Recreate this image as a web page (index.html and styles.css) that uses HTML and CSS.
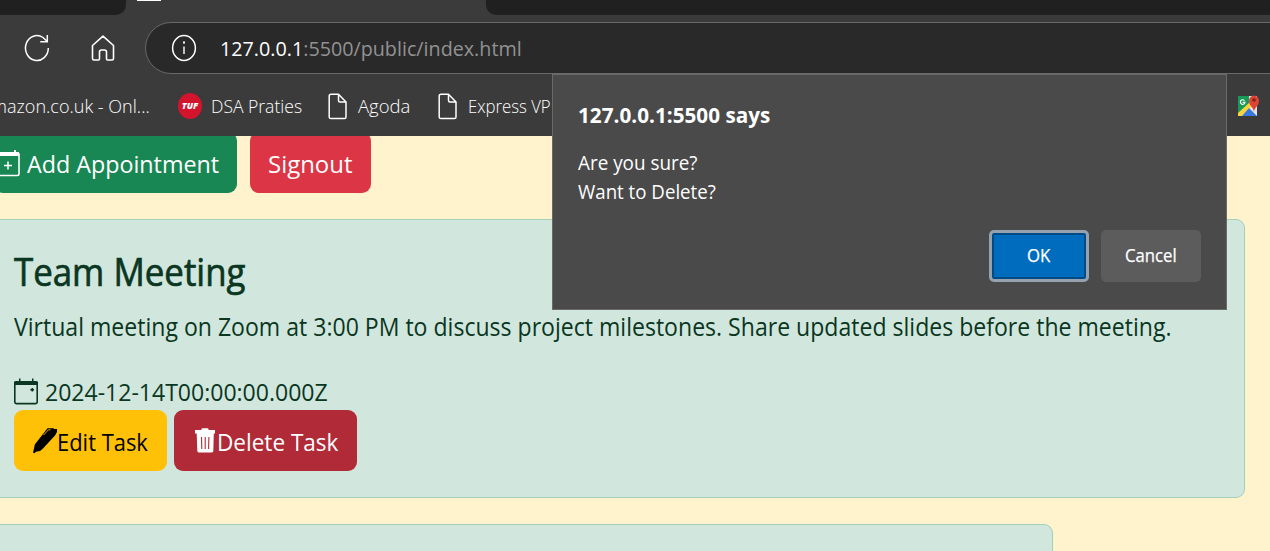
FILE: index.html
```html
<!DOCTYPE html>
<html lang="en">
<head>
<meta charset="utf-8">
<title>Appointments</title>
<link rel="stylesheet" href="styles.css">
</head>
<body>
<div class="window">
  <header class="chrome">
    <div class="tabs">
      <div class="tab-rest tab-left"></div>
      <div class="tab-active"><span class="favicon"></span></div>
      <div class="tab-rest tab-right"></div>
    </div>
    <div class="toolbar">
      <svg class="reload" width="26" height="28" viewBox="0 0 26 28" fill="none" stroke="#fff" stroke-width="1.5"><path d="M24.300 14A11.400 12.500 0 1 1 19 3.500L23.500 7.700M23.300 1v6.700h-7"/></svg>
      <svg class="home" width="24" height="26" viewBox="0 0 24 26" fill="none" stroke="#fff" stroke-width="1.6" stroke-linejoin="round"><path d="M1.500 10.5 12 1.200l10.500 9.300V23.500q0 1.500-1.500 1.500h-4.500q-1 0-1-1.300V17q0-2-2-2h-3q-2 0-2 2v6.700q0 1.300-1 1.300H3q-1.500 0-1.500-1.500z"/></svg>
      <div class="address">
        <svg class="info" width="26" height="28" viewBox="0 0 26 28"><ellipse cx="13" cy="14" rx="11.400" ry="12.500" fill="none" stroke="#fff" stroke-width="1.500"/><path d="M12.300 12.500h1.400V20h-1.400zM12 7.500h2v2h-2z" fill="#fff"/></svg>
        <span class="url"><b>127.0.0.1</b>:5500/public/index.html</span>
      </div>
    </div>
    <nav class="bookmarks">
      <span class="bm bm-amazon">mazon.co.uk - Onl...</span>
      <span class="tuf">TUF</span>
      <span class="bm bm-dsa">DSA Praties</span>
      <svg class="page-icon" width="20" height="27" viewBox="0 0 20 27" fill="none" stroke="#fff" stroke-width="1.500" stroke-linejoin="round"><path d="M3 1.200h7.500L18 9v15q0 1.600-1.500 1.600H3Q1.200 25.600 1.200 24V3Q1.200 1.200 3 1.200zM10.500 1.200V7.500q0 1.500 1.500 1.500h6"/></svg>
      <span class="bm bm-agoda">Agoda</span>
      <svg class="page-icon" width="20" height="27" viewBox="0 0 20 27" fill="none" stroke="#fff" stroke-width="1.500" stroke-linejoin="round"><path d="M3 1.200h7.500L18 9v15q0 1.600-1.500 1.600H3Q1.200 25.600 1.200 24V3Q1.200 1.200 3 1.200zM10.500 1.200V7.500q0 1.500 1.500 1.500h6"/></svg>
      <span class="bm bm-express">Express VP</span>
      <svg class="maps" width="24" height="26" viewBox="0 0 24 26"><path d="M1 3h19v20H1z" fill="#e8eaed"/><path d="M1 3h11v9L1 21z" fill="#169a56"/><path d="M1 20 13 9l3 3L5 23H1z" fill="#fbd43b"/><path d="M5 23l7-8 8 8z" fill="#3978df"/><path d="M14 14l6 7V10z" fill="#dfe3e8"/><path d="M7.500 7.600A2.300 2.300 0 1 0 8 9.300H5.700" fill="none" stroke="#fff" stroke-width="1.200"/><path d="M17 19c-.4-5-5-6-5-11a5 5.500 0 0 1 10 0c0 5-4.600 6-5 11z" fill="#df4336"/><circle cx="17" cy="7" r="1.800" fill="#7b2119"/></svg>
    </nav>
  </header>

  <main class="page">
    <div class="actions">
      <button class="btn btn-add">
        <svg width="26" height="28" viewBox="0 0 26 28"><path d="M1 5h24v20q0 1.500-1.500 1.500h-21Q1 26.500 1 25z" fill="none" stroke="#fff" stroke-width="1.600"/><path d="M1 3h24v4H1zM4 1h2v3H4zM20 1h2v3h-2z" fill="#fff"/><path d="M14 12.500v8M10 16.500h8" stroke="#fff" stroke-width="1.500"/></svg>
        <span class="t-add">Add Appointment</span>
      </button>
      <button class="btn btn-signout"><span class="t-signout">Signout</span></button>
    </div>
    <section class="card">
      <h2 class="title"><span class="t-title">Team Meeting</span></h2>
      <p class="desc"><span class="t-desc">Virtual meeting on Zoom at 3:00 PM to discuss project milestones. Share updated slides before the meeting.</span></p>
      <div class="date">
        <svg width="24" height="27" viewBox="0 0 24 27"><path d="M.8 4.500h22.400V24q0 1.600-1.500 1.600H2.300Q.8 25.600.8 24z" fill="none" stroke="#0a3622" stroke-width="1.600"/><path d="M0 5q0-2 2-2h20q2 0 2 2v2H0zM5 .5h1.500V4H5zM18 .5h1.500V4H18zM16.300 11h1.200V10h1.600v1h1v1.500h-1v1h-1.600v-1h-1.200z" fill="#0a3622"/></svg>
        <span class="t-date">2024-12-14T00:00:00.000Z</span>
      </div>
      <div class="card-actions">
        <button class="btn btn-edit">
          <svg width="24" height="27" viewBox="0 0 24 27"><path d="M14.500 1.200h6l.8.800h2.700v3L22 8.500 9.500 22l-2.500 2-4 .8L1.500 26.300 0 25.500l1-4 .8-4L4.500 14z"/><path d="M10.500 8l5-5.200h2" fill="none" stroke="#ffc107" stroke-width=".9"/></svg>
          <span class="t-edit">Edit Task</span>
        </button>
        <button class="btn btn-delete">
          <svg width="23" height="26" viewBox="0 0 23 26"><path d="M1 2h6.500V1q0-.8 1-.8h5q1 0 1 .8v1H21v3.500h-1.200L19.300 23q-.2 1.500-2 1.500h-12q-1.800 0-2-1.500L2.700 5.500H1z" fill="#fff"/><path d="M7.500 9l.3 12M11.200 9v12M14.900 9l-.3 12" stroke="#b02a37" stroke-width="1.100"/></svg>
          <span class="t-delete">Delete Task</span>
        </button>
      </div>
    </section>
    <section class="card card-next"></section>
  </main>

  <div class="dialog">
    <div class="dialog-title"><span class="t-says">127.0.0.1:5500 says</span></div>
    <div class="dialog-text"><span class="t-sure">Are you sure?</span><br><span class="t-want">Want to Delete?</span></div>
    <div class="dialog-actions">
      <button class="dbtn ok"><span class="t-ok">OK</span></button>
      <button class="dbtn cancel"><span class="t-cancel">Cancel</span></button>
    </div>
  </div>
</div>
</body>
</html>
```
FILE: styles.css
```css
* { box-sizing: border-box; }
body { margin: 0; font-family: "Open Sans", "Noto Sans", sans-serif; }
button { border: 0; margin: 0; padding: 0; font: inherit; }
svg { flex: none; display: block; }
span { display: inline-block; white-space: nowrap; transform-origin: 0 50%; }
.window { position: relative; width: 1270px; height: 551px; overflow: hidden; display: flex; flex-direction: column; background: #fff3cd; }

.chrome { height: 136px; flex: none; background: #3b3b3b; color: #fff; }
.tabs { display: flex; height: 22px; align-items: flex-start; }
.tab-rest { height: 15px; background: #202020; }
.tab-left { width: 126px; border-bottom-right-radius: 10px; }
.tab-active { width: 360px; padding-left: 11px; }
.favicon { display: block; width: 24px; height: 1px; background: #fff; }
.tab-right { flex: 1; border-bottom-left-radius: 10px; }
.toolbar { display: flex; align-items: center; height: 52px; }
.reload { margin-left: 24px; }
.home { margin-left: 41px; }
.address { flex: none; width: 1160px; height: 52px; margin-left: 30px; display: flex; align-items: center; background: #292929; border: 1px solid #686868; border-radius: 26px; padding-left: 25px; }
.url { margin-left: 23px; font-size: 20.500px; color: #929292; transform: scaleX(.962); }
.url b { font-weight: 400; color: #fff; }
.bookmarks { height: 62px; display: flex; align-items: center; padding-top: 2px; font-size: 18.500px; font-weight: 300; }
.bm { flex: none; padding-bottom: 2px; }
.bm-amazon { width: 187px; margin-left: -9px; transform: scaleX(.975); }
.tuf { flex: none; width: 24px; height: 26px; border-radius: 50%; background: #d3142d; font: italic 800 9px/26px "Open Sans", sans-serif; text-align: center; }
.bm-dsa { width: 117px; margin-left: 9px; transform: scaleX(.948); }
.bm-agoda { width: 80px; margin-left: 10px; }
.bm-express { width: 85px; margin-left: 10px; transform: scaleX(.905); }
.maps { margin-left: 684px; }

.page { flex: 1; overflow: hidden; }
.actions { display: flex; gap: 13px; height: 61px; margin: -4px 0 26px -6px; }
.btn { display: flex; align-items: center; height: 61px; border-radius: 9px; font-size: 24.500px; color: #fff; }
.btn span { padding-top: 2px; }
.btn-add { width: 243px; background: #198754; gap: 7px; }
.btn-signout { width: 121px; background: #dc3545; padding-left: 18px; }
.card { width: 1255px; height: 279px; margin-left: -10px; padding: 27px 0 0 23px; background: #d1e7dd; border: 1px solid #a3cfbb; border-radius: 9px; color: #0a3622; }
.card-next { width: 1063px; margin-top: 26px; }
.title { margin: -1px 0 0; height: 50px; font-size: 38px; line-height: 50px; font-weight: 400; -webkit-text-stroke: .7px #0a3622; }
.desc { margin: 12px 0 0; height: 38px; font-size: 24.700px; line-height: 38px; }
.date { display: flex; align-items: center; gap: 7px; margin-top: 26px; height: 38px; font-size: 24.500px; }
.card-actions { display: flex; gap: 7px; }
.btn-edit { width: 153px; background: #ffc107; color: #000; padding-left: 19px; }
.btn-delete { width: 183px; background: #b02a37; padding-left: 20px; }

/* condensed text runs */
.t-add { transform: scaleX(.95); }
.t-signout { transform: scaleX(.977); }
.t-title { transform: scaleX(.917); }
.t-desc { transform: scaleX(.934); }
.t-date { transform: scaleX(.94); }
.t-edit { transform: scaleX(.895); }
.t-delete { transform: scaleX(.92); }
.t-says { transform: scaleX(1.01); }
.t-sure { transform: scaleX(.968); }
.t-want { transform: scaleX(.958); }
.t-ok, .t-cancel { transform: scaleX(.93); transform-origin: 50% 50%; padding-bottom: 2px; }

.dialog { position: absolute; left: 552px; top: 73px; width: 675px; height: 237px; padding: 24px 25px 0; background: #4a4a4a; border: 1px solid #6a6a6a; border-top-width: 2px; color: #fff; }
.dialog-title { height: 32px; line-height: 32px; font-size: 20.500px; font-weight: 700; }
.dialog-text { margin-top: 17px; height: 58px; font-size: 19.500px; line-height: 29px; }
.dialog-actions { display: flex; justify-content: flex-end; gap: 12px; margin-top: 24px; }
.dbtn { width: 100px; height: 52px; border-radius: 5px; color: #fff; font-size: 18px; background: #5c5c5c; -webkit-text-stroke: .25px #fff; }
.ok { background: #006cbe; border: 3px solid #96a3ae; box-shadow: inset 0 0 0 2px #004b85; }
```
